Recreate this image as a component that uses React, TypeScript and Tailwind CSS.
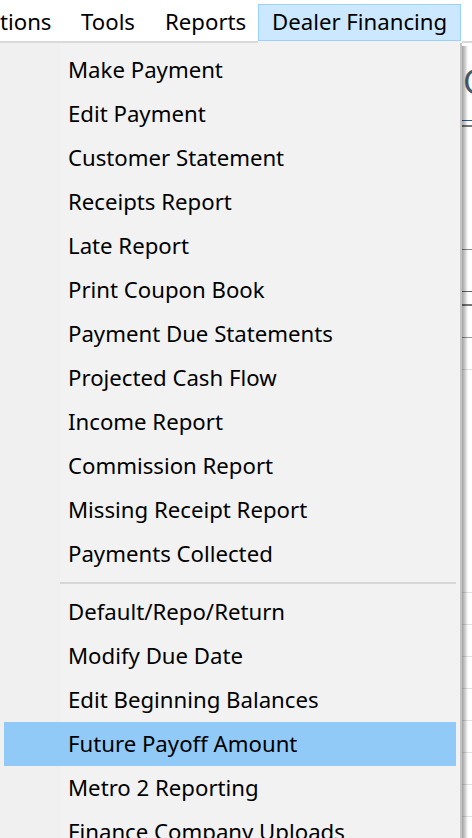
import React from "react";

const group1 = [
  "Make Payment",
  "Edit Payment",
  "Customer Statement",
  "Receipts Report",
  "Late Report",
  "Print Coupon Book",
  "Payment Due Statements",
  "Projected Cash Flow",
  "Income Report",
  "Commission Report",
  "Missing Receipt Report",
  "Payments Collected",
];

const group2 = [
  "Default/Repo/Return",
  "Modify Due Date",
  "Edit Beginning Balances",
  "Future Payoff Amount",
  "Metro 2 Reporting",
  "Finance Company Uploads",
];

const font = { fontFamily: '"Noto Sans", "Open Sans", sans-serif' };

function Item({ label, active }: { label: string; active?: boolean }) {
  return (
    <div
      className={`mx-[4px] flex h-[44px] shrink-0 items-center pl-[64px] text-[22.2px] leading-none text-black ${
        active ? "bg-[#91c9f7]" : ""
      }`}
    >
      <span className="whitespace-nowrap">{label}</span>
    </div>
  );
}

export default function App() {
  return (
    <div
      className="flex h-[838px] w-[472px] flex-col overflow-hidden bg-white"
      style={font}
    >
      {/* menu bar */}
      <div className="flex h-[41px] shrink-0 items-end bg-white text-[22.2px] leading-none text-black">
        <div className="flex h-[37px] w-[67px] items-center whitespace-nowrap">tions</div>
        <div className="flex h-[37px] w-[84px] items-center whitespace-nowrap pl-[14px]">Tools</div>
        <div className="flex h-[37px] w-[107px] items-center whitespace-nowrap pl-[14px]">Reports</div>
        <div className="flex h-[37px] w-[203px] items-center whitespace-nowrap border border-[#99d1ff] bg-[#cce8ff] pl-[13px]">
          Dealer Financing
        </div>
      </div>

      <div className="flex min-h-0 flex-1">
        {/* dropdown */}
        <div className="flex w-[462px] shrink-0 flex-col">
          <div className="flex h-[2px] shrink-0">
            <div className="w-[258px] bg-[#d9d9d9]" />
            <div className="flex-1 bg-[#f2f2f2]" />
          </div>
          <div className="flex flex-1 flex-col border-r-2 border-[#c4c4c4] bg-[linear-gradient(to_right,#f0f0f0_60px,#f2f2f2_60px)] pt-[5px]">
            {group1.map((l) => (
              <Item key={l} label={l} />
            ))}
            <div className="flex h-[14px] shrink-0 items-start pt-[6px]">
              <div className="ml-[60px] mr-[4px] h-[2px] flex-1 bg-[#d7d7d7]" />
            </div>
            {group2.map((l) => (
              <Item key={l} label={l} active={l === "Future Payoff Amount"} />
            ))}
          </div>
        </div>

        {/* window content peeking out behind the menu */}
        <div className="relative flex flex-1 flex-col overflow-hidden bg-white">
          <div className="h-[2px] shrink-0 bg-[#d9d9d9]" />
          <div className="h-[20px] shrink-0" />
          <div className="flex h-[36px] shrink-0 items-center pl-[1px] text-[34px] leading-none text-[#4a5a6a]">
            C
          </div>
          <div className="h-[21px] shrink-0" />
          <div className="h-[1px] shrink-0 bg-[#2b5797]" />
          <div className="h-[4px] shrink-0" />
          <div className="h-[2px] shrink-0 bg-[#7a7a7a]" />
          <div className="h-[122px] shrink-0" />
          <div className="h-[1px] shrink-0 bg-[#8a8a8a]" />
          <div className="h-[41px] shrink-0" />
          <div className="h-[1px] shrink-0 bg-[#666]" />
          <div className="h-[12px] shrink-0" />
          <div className="h-[2px] shrink-0 bg-[#777]" />
          <div className="h-[31px] shrink-0" />
          <div className="h-[1px] shrink-0 bg-[#999]" />
          <div className="h-[31px] shrink-0" />
          <div className="h-[1px] shrink-0 bg-[#e0e0e0]" />
          <div className="h-[222px] shrink-0" />
          {[0, 1, 2, 3, 4, 5, 6, 7].map((i) => (
            <div key={i} className="flex h-[32px] shrink-0 flex-col">
              <div className="h-[1px] bg-[#e2e2e2]" />
            </div>
          ))}
          {/* drop shadow of the menu */}
          <div className="pointer-events-none absolute bottom-0 left-0 top-[5px] w-[6px] bg-[linear-gradient(to_right,rgba(0,0,0,0.36),rgba(0,0,0,0.26)_35%,rgba(0,0,0,0.12)_70%,rgba(0,0,0,0))]" />
        </div>
      </div>
    </div>
  );
}
